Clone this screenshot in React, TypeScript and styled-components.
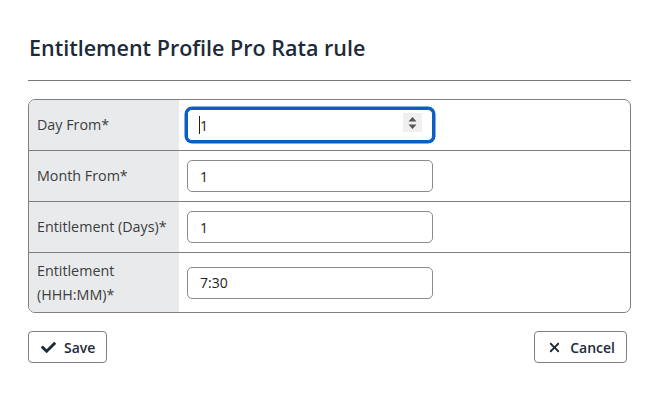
import styled, { createGlobalStyle } from "styled-components"
import { FaCheck } from "react-icons/fa"
import { FaXmark } from "react-icons/fa6"

const GlobalStyle = createGlobalStyle`
    body {
        margin: 0;
        background: #fff;
        font-family: "Open Sans", "Liberation Sans", sans-serif;
    }
`
const Page = styled.div`
    width: 603px;
    padding: 33px 0 0 28px;
`
const Title = styled.h1`
    margin: 0 0 0 1px;
    font-size: 21.5px;
    font-weight: 600;
    line-height: 29px;
    color: #1d2a39;
`
const Rule = styled.hr`
    margin: 18px 0 18px;
    border: 0;
    border-top: 1px solid #77797c;
`
const Table = styled.div`
    border: 1px solid #7d8083;
    border-radius: 7px;
    overflow: hidden;
`
const Row = styled.div<{ tall?: boolean }>`
    display: grid;
    grid-template-columns: 150px 1fr;
    height: ${({ tall }) => (tall ? "59px" : "50px")};
    & + & {
        border-top: 1px solid #7d8083;
    }
`
const Label = styled.div`
    background: #e9eaec;
    display: flex;
    align-items: center;
    padding: 0 8px;
    font-size: 14.3px;
    line-height: 24px;
    color: #3b3d40;
`
const Cell = styled.div`
    display: flex;
    align-items: center;
    padding-left: 8px;
`
const InputWrap = styled.div`
    position: relative;
    width: 246px;
    height: 32px;
`
const Input = styled.input<{ focused?: boolean }>`
    box-sizing: border-box;
    width: 100%;
    height: 100%;
    padding: 0 12px;
    border: 1px solid ${({ focused }) => (focused ? "#0b5fc4" : "#898c8f")};
    border-radius: 5px;
    box-shadow: ${({ focused }) => (focused ? "0 0 0 2.5px #0b5fc4" : "none")};
    font-family: inherit;
    font-size: 14px;
    color: #222;
    outline: none;
    background: #fff;
`
const Caret = styled.span`
    position: absolute;
    left: 12px;
    top: 7px;
    width: 1px;
    height: 18px;
    background: #222;
`
const Spinner = styled.span`
    position: absolute;
    right: 11px;
    top: 4px;
    width: 19px;
    height: 19px;
    background: #efefef;
    display: flex;
    align-items: center;
    justify-content: center;
`
const Buttons = styled.div`
    display: flex;
    justify-content: space-between;
    margin-top: 18px;
    padding-right: 4px;
`
const Button = styled.button<{ gap: number }>`
    display: flex;
    align-items: center;
    gap: ${({ gap }) => gap}px;
    height: 32px;
    padding: 0 11px 0 12px;
    border: 1px solid #7d8083;
    border-radius: 4px;
    background: #fff;
    font-family: inherit;
    font-size: 14px;
    font-weight: 600;
    color: #1d2a39;
    svg {
        color: #1d2a39;
    }
`

const rows = [
    { label: "Day From*", value: "1", focused: true },
    { label: "Month From*", value: "1" },
    { label: "Entitlement (Days)*", value: "1" },
    { label: "Entitlement (HHH:MM)*", value: "7:30", tall: true },
]

function App() {
    return (
        <Page>
            <GlobalStyle />
            <Title>Entitlement Profile Pro Rata rule</Title>
            <Rule />
            <Table>
                {rows.map((r) => (
                    <Row key={r.label} tall={r.tall}>
                        <Label>{r.label}</Label>
                        <Cell>
                            <InputWrap>
                                <Input focused={r.focused} value={r.value} readOnly />
                                {r.focused && <Caret />}
                                {r.focused && (
                                    <Spinner>
                                        <svg width="9" height="14" viewBox="0 0 9 14">
                                            <path d="M4.5 1 L8.5 5.5 H0.5 Z M4.5 13 L8.5 8.5 H0.5 Z" fill="#555" />
                                        </svg>
                                    </Spinner>
                                )}
                            </InputWrap>
                        </Cell>
                    </Row>
                ))}
            </Table>
            <Buttons>
                <Button gap={8}>
                    <FaCheck size={15} />
                    Save
                </Button>
                <Button gap={8}>
                    <FaXmark size={15} />
                    Cancel
                </Button>
            </Buttons>
        </Page>
    )
}
export default App
